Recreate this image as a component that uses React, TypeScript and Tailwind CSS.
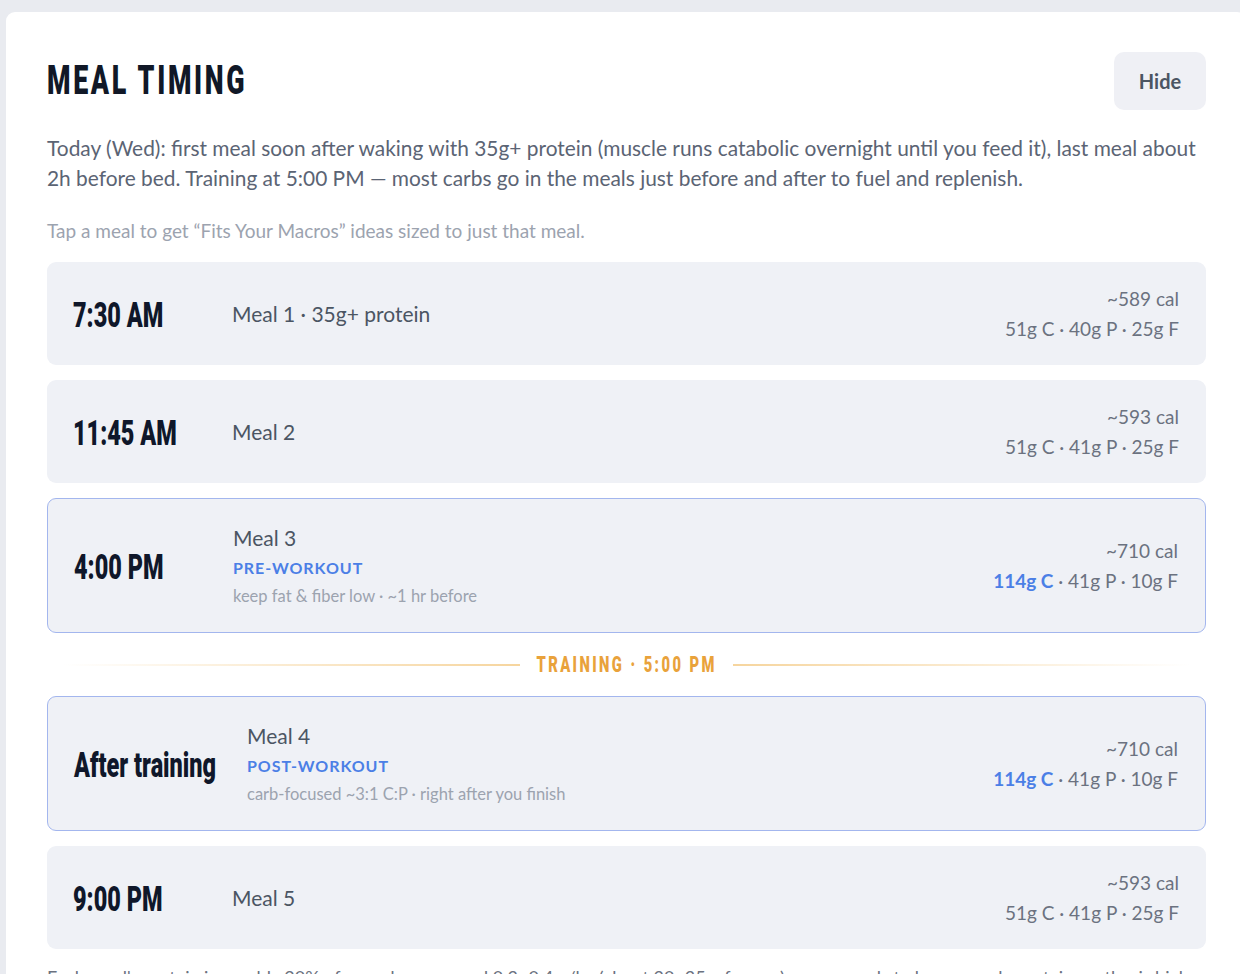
import React from 'react';

const COND = { fontFamily: "Roboto, 'DejaVu Sans', sans-serif" };
const BODY = { fontFamily: "Lato, 'Noto Sans', 'Liberation Sans', sans-serif" };

type Meal = {
  time: string;
  timeW: string;
  name: string;
  tag?: string;
  note?: string;
  cal: number;
  c: number;
  p: number;
  f: number;
  focus?: boolean;
};

const MEALS: Meal[] = [
  { time: '7:30 AM', timeW: 'w-[139px]', name: 'Meal 1 · 35g+ protein', cal: 589, c: 51, p: 40, f: 25 },
  { time: '11:45 AM', timeW: 'w-[139px]', name: 'Meal 2', cal: 593, c: 51, p: 41, f: 25 },
  { time: '4:00 PM', timeW: 'w-[139px]', name: 'Meal 3', tag: 'PRE-WORKOUT', note: 'keep fat & fiber low · ~1 hr before', cal: 710, c: 114, p: 41, f: 10, focus: true },
  { time: 'After training', timeW: 'w-[153px]', name: 'Meal 4', tag: 'POST-WORKOUT', note: 'carb-focused ~3:1 C:P · right after you finish', cal: 710, c: 114, p: 41, f: 10, focus: true },
  { time: '9:00 PM', timeW: 'w-[139px]', name: 'Meal 5', cal: 593, c: 51, p: 41, f: 25 },
];

// narrow display face (Oswald-like) squeezed from Roboto Black
function Cond({ children, className = '', origin = 'origin-left' }: { children: React.ReactNode; className?: string; origin?: string }) {
  return (
    <span className={'inline-block shrink-0 whitespace-nowrap font-black scale-x-[0.67] ' + origin + ' ' + className} style={COND}>
      {children}
    </span>
  );
}

function MealRow({ meal }: { meal: Meal }) {
  return (
    <div
      className={
        'flex items-center gap-5 rounded-[9px] bg-[#eff1f6] pl-[26px] pr-[27px] ' +
        (meal.focus ? 'h-[135px] border-[1.5px] border-[#a3b6ee]' : 'h-[103px]')
      }
    >
      <div className={'mt-[3px] shrink-0 whitespace-nowrap ' + meal.timeW}>
        <Cond className="text-[35px] leading-none text-[#0f172a]">{meal.time}</Cond>
      </div>
      <div className="flex flex-1 flex-col">
        <div className="text-[21px] leading-[30px] text-[#4b5563]">{meal.name}</div>
        {meal.tag && (
          <div className="mt-[3px] text-[16px] font-bold leading-[24px] tracking-[0.06em] text-[#4b7fe6]">{meal.tag}</div>
        )}
        {meal.note && <div className="mt-[3px] text-[16.5px] leading-[26px] text-[#9ca3af]">{meal.note}</div>}
      </div>
      <div className="flex flex-col items-end text-[19px] leading-[30px] text-[#6b7280]">
        <div>~{meal.cal} cal</div>
        <div>
          {meal.focus ? (
            <span className="font-bold text-[#4b7fe6]">{meal.c}g C</span>
          ) : (
            <span>{meal.c}g C</span>
          )}
          {' · '}
          {meal.p}g P · {meal.f}g F
        </div>
      </div>
    </div>
  );
}

function TrainingDivider() {
  return (
    <div className="flex h-[48px] items-center gap-4 px-4">
      <div className="h-[2px] flex-1 bg-gradient-to-r from-transparent to-[#f6d59e]" />
      <div className="flex w-[181px] justify-center">
        <Cond origin="origin-center" className="text-[22px] leading-none tracking-[3.6px] text-[#e9a23b]">
          TRAINING · 5:00 PM
        </Cond>
      </div>
      <div className="h-[2px] flex-1 bg-gradient-to-l from-transparent to-[#f6d59e]" />
    </div>
  );
}

export default function App() {
  return (
    <div className="h-[974px] w-[1240px] overflow-hidden bg-[#e9ebf0] pl-[6px] pt-[12px]" style={BODY}>
      <div className="w-[1240px] rounded-[9px] bg-white pl-[41px] pr-[40px] pt-[40px] pb-10">
        {/* ── Header ── */}
        <div className="flex items-center justify-between">
          <h2 className="leading-none">
            <Cond className="text-[40px] leading-none tracking-[4px] text-[#111827]">MEAL TIMING</Cond>
          </h2>
          <button className="h-[58px] w-[92px] rounded-[10px] bg-[#eff0f5] text-[20px] font-bold text-[#4b5563]">
            Hide
          </button>
        </div>

        <p className="mt-[23px] text-[20.9px] leading-[30px] text-[#5b6474]">
          Today (Wed): first meal soon after waking with 35g+ protein (muscle runs catabolic overnight until you feed it), last meal about
          2h before bed. Training at 5:00 PM — most carbs go in the meals just before and after to fuel and replenish.
        </p>

        <p className="mt-[26px] text-[19px] leading-[24px] text-[#9ca3af]">
          Tap a meal to get “Fits Your Macros” ideas sized to just that meal.
        </p>

        {/* ── Meals ── */}
        <div className="mt-[19px] flex flex-col">
          <div className="flex flex-col gap-[15px]">
            <MealRow meal={MEALS[0]} />
            <MealRow meal={MEALS[1]} />
            <MealRow meal={MEALS[2]} />
          </div>
          <div className="pt-[8px] pb-[7px]">
            <TrainingDivider />
          </div>
          <div className="flex flex-col gap-[15px]">
            <MealRow meal={MEALS[3]} />
            <MealRow meal={MEALS[4]} />
          </div>
        </div>

        <p className="mt-[14px] text-[18px] leading-[28px] text-[#6b7280]">
          Each meal's protein is roughly 20% of your day — spread 0.3–0.4 g/kg (about 30–35 g for you) across meals to keep muscle protein synthesis high all day.
        </p>
      </div>
    </div>
  );
}
